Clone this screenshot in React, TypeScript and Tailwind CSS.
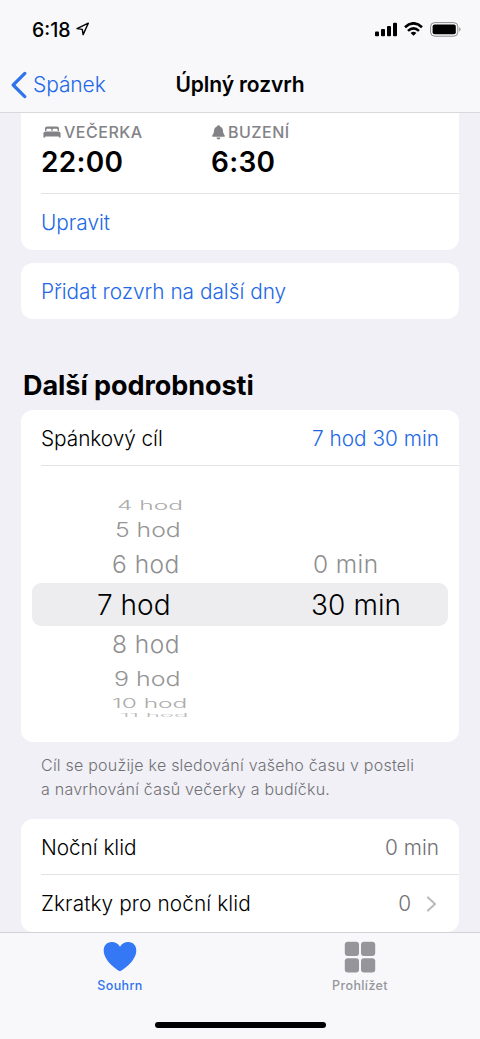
import type { ReactNode } from "react";

interface WheelRow {
	hours: string;
	minutes?: string;
	row: string;
	hoursText: string;
	minutesText?: string;
}

const wheelRows: WheelRow[] = [
	{
		hours: "4 hod",
		row: "h-[17px] text-[#ababab]",
		hoursText: "ml-[85px] text-[24px] scale-x-[1.02] scale-y-[0.52]",
	},
	{
		hours: "5 hod",
		row: "h-8 text-[#959595]",
		hoursText: "ml-[83px] text-[24px] scale-x-[1.03] scale-y-[0.82]",
	},
	{
		hours: "6 hod",
		minutes: "0 min",
		row: "h-[37px] text-[#8e8e90]",
		hoursText: "ml-[80px] text-[24.5px] tracking-[0.5px]",
		minutesText: "ml-[73px] text-[24.5px] tracking-[0.4px]",
	},
	{
		hours: "7 hod",
		minutes: "30 min",
		row: "h-[43px] rounded-[9px] bg-[#ededef] pt-px text-black",
		hoursText: "ml-[65px] text-[28px]",
		minutesText: "ml-[71px] text-[28px] tracking-[0.1px]",
	},
	{
		hours: "8 hod",
		row: "h-[37px] text-[#8e8e90]",
		hoursText: "ml-[80px] text-[24.5px] tracking-[0.5px]",
	},
	{
		hours: "9 hod",
		row: "h-8 text-[#959595]",
		hoursText: "ml-[82px] text-[24px] scale-x-[1.04] scale-y-[0.82]",
	},
	{
		hours: "10 hod",
		row: "h-4 pt-px text-[#ababab]",
		hoursText: "ml-[80px] text-[24px] scale-x-[1.02] scale-y-[0.52]",
	},
	{
		hours: "11 hod",
		row: "h-[7px] pt-[3px] text-[#bbbbbb]",
		hoursText: "ml-[88px] text-[24px] scale-x-[1] scale-y-[0.18]",
	},
];

function StatusBar() {
	return (
		<div className="flex h-[56px] items-start pt-[18px] pr-[19px] pl-8">
			<span className="w-[39px] text-[19.5px] leading-[24px] font-medium">6:18</span>
			<svg className="mt-[4px] ml-[5px]" width="14" height="14" viewBox="0 0 14 14">
				<path
					d="M12.3 1.2 1 6.6 6.3 7.4 7.1 12.6Z"
					fill="none"
					stroke="#000"
					strokeWidth="1.4"
					strokeLinejoin="round"
				/>
			</svg>
			<svg className="mt-[4px] ml-auto" width="22" height="15" viewBox="0 0 22 15">
				<rect x="0" y="9.5" width="4" height="4.7" rx="1" />
				<rect x="6" y="7" width="4" height="7.2" rx="1" />
				<rect x="12" y="4" width="4" height="10.2" rx="1" />
				<rect x="18" y="0.8" width="4" height="13.4" rx="1" />
			</svg>
			<svg className="mt-[4px] ml-[7px]" width="19" height="14" viewBox="0 0 19 14">
				<g fill="none" stroke="#000" strokeWidth="2.6">
					<path d="M1 5.2Q9.5 -2.6 18 5.2" />
					<path d="M4 8.9Q9.5 3.8 15 8.9" />
				</g>
				<path d="M6.6 10.9Q9.5 8.5 12.4 10.9L9.5 13.8Z" />
			</svg>
			<svg className="mt-[4px] ml-[7px]" width="31" height="15" viewBox="0 0 31 15">
				<rect x="0.6" y="0.6" width="27.2" height="13.6" rx="4" fill="none" stroke="#8a8a8a" strokeWidth="1" />
				<rect x="2.6" y="2.6" width="23.2" height="9.6" rx="2" />
				<path d="M29.2 5.2Q30.6 5.8 30.6 7.4T29.2 9.6Z" fill="#999" />
			</svg>
		</div>
	);
}

function Header() {
	return (
		<header className="h-[113px] shrink-0 border-b border-[#d9d9dc] bg-[#f8f8fa]">
			<StatusBar />
			<div className="grid h-[56px] grid-cols-[1fr_auto_1fr] items-center pt-px">
				<button className="flex items-center pl-[10px] text-[#2268e6]">
					<svg width="17" height="28" viewBox="0 0 17 28">
						<path
							d="M14.8 2.4 3.2 14 14.8 25.6"
							fill="none"
							stroke="#2f74ec"
							strokeWidth="3.2"
							strokeLinecap="round"
							strokeLinejoin="round"
						/>
					</svg>
					<span className="ml-[6px] pt-px text-[21px] tracking-[-0.1px]">Spánek</span>
				</button>
				<h1 className="pt-px text-[21px] font-semibold tracking-[-0.1px]">Úplný rozvrh</h1>
				<span />
			</div>
		</header>
	);
}

function Card({ className, children }: { className: string; children: ReactNode }) {
	return <section className={`mx-[21px] bg-white ${className}`}>{children}</section>;
}

function BedIcon() {
	return (
		<svg className="ml-[2px]" width="18" height="14" viewBox="0 0 18 14" fill="currentColor">
			<path d="M2 6V3.4Q2 1.4 4 1.4H14Q16 1.4 16 3.4V6H14.6V4.8Q14.6 3.8 13.6 3.8H10.6Q9.6 3.8 9.6 4.8V6H8.4V4.8Q8.4 3.8 7.4 3.8H4.4Q3.4 3.8 3.4 4.8V6Z" />
			<path d="M3 6.6H15Q17.6 6.6 17.6 9V12.6H15.8V11.4H2.2V12.6H0.4V9Q0.4 6.6 3 6.6Z" />
		</svg>
	);
}

function BellIcon() {
	return (
		<svg className="ml-px" width="13" height="15" viewBox="0 0 13 15" fill="currentColor">
			<path d="M6.5 0.3Q7.9 0.3 8.1 1.5Q11 2.5 11 6Q11 8.7 12.6 10.3Q13.2 11.8 12 11.8H1Q-0.2 11.8 0.4 10.3Q2 8.7 2 6Q2 2.5 4.9 1.5Q5.1 0.3 6.5 0.3Z" />
			<path d="M4.5 12.6H8.5Q8.2 14.5 6.5 14.5T4.5 12.6Z" />
		</svg>
	);
}

function TimeBlock({ icon, label, time }: { icon: ReactNode; label: string; time: string }) {
	return (
		<div className="w-[170px]">
			<div className="flex h-[20px] items-center gap-[3px] text-[#838387]">
				{icon}
				<span className="text-[16px] font-medium tracking-[0.5px]">{label}</span>
			</div>
			<div className="mt-[5px] text-[28px] leading-[30px] font-semibold tracking-[0.3px]">{time}</div>
		</div>
	);
}

function HoursWheel() {
	return (
		<div className="h-[276px] px-[11px] pt-[31px]">
			{wheelRows.map((item) => (
				<div key={item.hours} className={`grid grid-cols-2 content-center items-center ${item.row}`}>
					<span className={`origin-left leading-none whitespace-nowrap ${item.hoursText}`}>{item.hours}</span>
					{item.minutes && (
						<span className={`origin-left leading-none whitespace-nowrap ${item.minutesText}`}>
							{item.minutes}
						</span>
					)}
				</div>
			))}
		</div>
	);
}

function TabBar() {
	return (
		<nav className="flex h-[107px] shrink-0 flex-col border-t border-[#d2d2d7] bg-[#f8f8fa]">
			<div className="grid grid-cols-2 pt-[8px] text-[12.5px] leading-[16px] font-medium">
				<div className="flex flex-col items-center text-[#2f74ec]">
					<svg width="34" height="32" viewBox="0 0 34 32" fill="#3478f6">
						<path d="M17 30.2C15.8 30.2 0.7 20.5 0.7 9.5C0.7 4.5 4 1 8.6 1C12.4 1 15.4 2.8 17 5.7C18.6 2.8 21.6 1 25.4 1C30 1 33.3 4.5 33.3 9.5C33.3 20.5 18.2 30.2 17 30.2Z" />
					</svg>
					<span className="mt-[5px] tracking-[0.4px]">Souhrn</span>
				</div>
				<div className="flex flex-col items-center text-[#96969a]">
					<svg width="32" height="32" viewBox="0 0 32 32" fill="currentColor">
						<rect x="0.8" y="0.8" width="14.2" height="14.2" rx="3" />
						<rect x="17" y="0.8" width="14.2" height="14.2" rx="3" />
						<rect x="0.8" y="17.2" width="14.2" height="14.2" rx="3" />
						<rect x="17" y="17.2" width="14.2" height="14.2" rx="3" />
					</svg>
					<span className="mt-[5px] tracking-[0.4px]">Prohlížet</span>
				</div>
			</div>
			<div className="mx-auto mt-auto mb-[11px] h-[6px] w-[171px] rounded-full bg-black" />
		</nav>
	);
}

export default function App() {
	return (
		<div className="flex h-[1039px] w-[480px] flex-col overflow-hidden bg-[#f1f0f6] font-['Inter','Noto_Sans',sans-serif] text-[20.8px] font-light text-black">
			<Header />
			<main className="min-h-0 flex-1 overflow-hidden">
				<Card className="h-[137px] rounded-b-[12px] pl-5">
					<div className="flex h-[81px] border-b border-[#e3e3e6] pt-[9px]">
						<TimeBlock icon={<BedIcon />} label="VEČERKA" time="22:00" />
						<TimeBlock icon={<BellIcon />} label="BUZENÍ" time="6:30" />
					</div>
					<div className="flex h-14 items-center pt-[2px] text-[#2268e6]">Upravit</div>
				</Card>

				<Card className="mt-[13px] flex h-14 items-center rounded-[12px] pt-[2px] pl-5 text-[#2268e6]">
					Přidat rozvrh na další dny
				</Card>

				<h2 className="mt-[50px] ml-[23px] h-[41px] pt-px text-[27px] leading-[32px] font-bold tracking-[-0.05px]">
					Další podrobnosti
				</h2>

				<Card className="h-[332px] rounded-[12px]">
					<div className="ml-5 flex h-14 items-center justify-between border-b border-[#e3e3e6] pt-[3px] pr-5">
						<span className="tracking-[-0.05px]">Spánkový cíl</span>
						<span className="text-[#2268e6]">7 hod 30 min</span>
					</div>
					<HoursWheel />
				</Card>

				<p className="mt-[12px] ml-[41px] h-[65px] text-[16px] leading-[23.5px] tracking-[0.23px] text-[#707075]">
					Cíl se použije ke sledování vašeho času v posteli
					<br />a navrhování časů večerky a budíčku.
				</p>

				<Card className="rounded-[12px] pl-5">
					<div className="flex h-14 items-center justify-between border-b border-[#e3e3e6] pt-[3px] pr-5">
						<span className="tracking-[-0.05px]">Noční klid</span>
						<span className="text-[#707075]">0 min</span>
					</div>
					<div className="flex h-[57px] items-center pt-px pr-[22px]">
						<span className="tracking-[0.1px]">Zkratky pro noční klid</span>
						<span className="ml-auto text-[#707075]">0</span>
						<svg className="ml-[15px]" width="11" height="16" viewBox="0 0 11 16">
							<path
								d="M2 1.5 9 8 2 14.5"
								fill="none"
								stroke="#bcbcc0"
								strokeWidth="2.2"
								strokeLinecap="round"
								strokeLinejoin="round"
							/>
						</svg>
					</div>
				</Card>
			</main>
			<TabBar />
		</div>
	);
}
